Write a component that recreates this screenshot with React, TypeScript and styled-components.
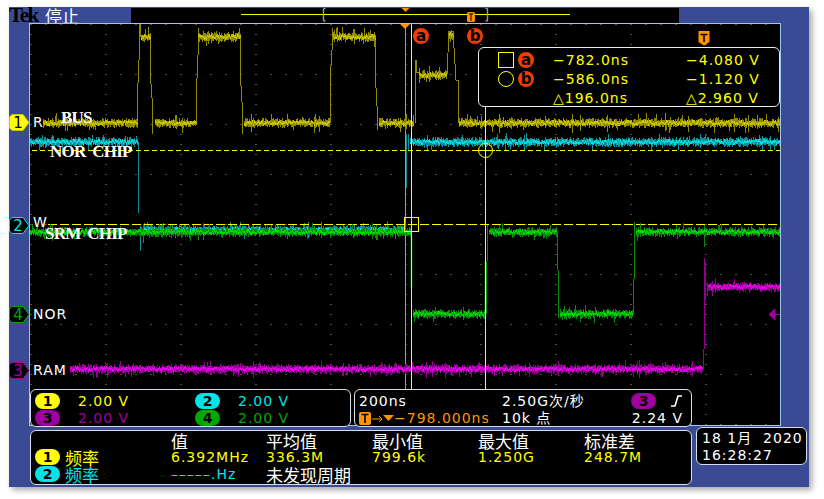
import React from 'react';
import styled, { createGlobalStyle } from 'styled-components';

const YELLOW = '#ffff00';
const CYAN = '#00e4e8';
const PURPLE = '#a000a0';
const GREEN = '#00a800';
const ORANGE = '#ff9400';
const BLUE = '#3b4a94';

const GlobalStyle = createGlobalStyle`
  html, body {
    margin: 0;
    padding: 0;
    background: #fff;
  }
  body {
    font-family: "DejaVu Sans", "Noto Sans CJK SC", sans-serif;
  }
`;

const Page = styled.div`
  width: 824px;
  height: 499px;
  padding: 7px 0 0 9px;
  box-sizing: border-box;
  overflow: hidden;
`;

const Frame = styled.div`
  width: 800px;
  height: 480px;
  background: ${BLUE};
  box-shadow: 3px 3px 6px rgba(0, 0, 0, 0.35);
  display: flex;
  flex-direction: column;
`;

const TopBar = styled.div`
  height: 17px;
  display: flex;
  align-items: center;
  flex: none;
`;

const Brand = styled.span`
  width: 36px;
  font-family: "Liberation Serif", serif;
  font-weight: bold;
  font-size: 21px;
  line-height: 17px;
  letter-spacing: -1.4px;
  color: #000;
`;

const Status = styled.span`
  width: 86px;
  font-family: "Noto Sans CJK SC", sans-serif;
  font-size: 17px;
  line-height: 16px;
  color: #fff;
`;

const RecordBar = styled.svg`
  display: block;
  width: 548px;
  height: 15px;
  background: #000;
`;

const Body = styled.div`
  display: grid;
  grid-template-columns: 21px 662px 117px;
  grid-template-rows: 365px 38px 3px 55px;
  flex: none;
`;

const Screen = styled.div`
  grid-column: 2 / 4;
  grid-row: 1 / 3;
  width: 750px;
  height: 401px;
  position: relative;
  background: #000;
  box-shadow: 0 0 0 1px #9cc4f4;
`;

const Plot = styled.svg`
  display: block;
  width: 750px;
  height: 401px;
`;

const Marker = styled.svg<{ $top: number }>`
  position: absolute;
  left: -21px;
  top: ${(p) => p.$top}px;
  width: 21px;
  height: 17px;
`;

const ChannelLabel = styled.span<{ $left: number; $top: number; $serif?: boolean }>`
  position: absolute;
  left: ${(p) => p.$left}px;
  top: ${(p) => p.$top}px;
  color: #fff;
  white-space: pre;
  line-height: 16px;
  font-family: ${(p) => (p.$serif ? '"Liberation Serif", serif' : '"DejaVu Sans", sans-serif')};
  font-weight: ${(p) => (p.$serif ? 'bold' : 'normal')};
  font-size: ${(p) => (p.$serif ? '17px' : '14px')};
  letter-spacing: ${(p) => (p.$serif ? '-0.8px' : '1px')};
`;

const Badge = styled.span<{ $left?: number; $top?: number }>`
  width: 16px;
  height: 16px;
  border-radius: 50%;
  background: #f23c00;
  color: #000;
  font-size: 15px;
  font-weight: bold;
  line-height: 14px;
  display: inline-flex;
  align-items: center;
  justify-content: center;
  ${(p) => (p.$left !== undefined ? `position: absolute; left: ${p.$left}px; top: ${p.$top}px;` : '')}
`;

const CursorBox = styled.div`
  position: absolute;
  left: 448px;
  top: 23px;
  width: 302px;
  height: 60px;
  box-sizing: border-box;
  padding: 2px 0 0 19px;
  background: #000;
  border: 1px solid #e8eef4;
  border-radius: 6px;
  display: grid;
  grid-template-columns: 20px 35px 133px 1fr;
  grid-auto-rows: 19px;
  align-items: center;
`;

const CursorMark = styled.span<{ $round?: boolean }>`
  width: 14px;
  height: 14px;
  border: 1px solid ${YELLOW};
  border-radius: ${(p) => (p.$round ? '50%' : '0')};
`;

const Value = styled.span<{ $color?: string; $column?: number }>`
  color: ${(p) => p.$color || YELLOW};
  font-size: 14px;
  letter-spacing: 1px;
  white-space: pre;
  line-height: 16px;
  ${(p) => (p.$column ? `grid-column: ${p.$column};` : '')}
`;

const Panel = styled.div`
  box-sizing: border-box;
  background: #000;
  border: 1px solid #d4dfea;
  border-radius: 6px;
`;

const ReadoutRow = styled.div`
  grid-column: 2;
  grid-row: 2;
  display: flex;
  gap: 3px;
  position: relative;
`;

const VerticalPanel = styled(Panel)`
  width: 321px;
  display: grid;
  grid-template-columns: 160px 1fr;
  grid-auto-rows: 17px;
  padding: 2px 0 0 4px;
`;

const ChannelCell = styled.div`
  display: flex;
  align-items: center;
  gap: 18px;
`;

const Pill = styled.span<{ $bg: string }>`
  width: 25px;
  height: 16px;
  flex: none;
  border-radius: 8px;
  background: ${(p) => p.$bg};
  color: #000;
  font-size: 14px;
  font-weight: bold;
  line-height: 16px;
  text-align: center;
`;

const TimePanel = styled(Panel)`
  width: 338px;
  display: grid;
  grid-template-columns: 143px 127px 1fr;
  grid-auto-rows: 17px;
  padding: 2px 8px 0 4px;
`;

const TimeCell = styled.div<{ $end?: boolean }>`
  display: flex;
  align-items: center;
  gap: ${(p) => (p.$end ? '14px' : '0')};
  justify-content: ${(p) => (p.$end ? 'flex-end' : 'flex-start')};
`;

const MeasurePanel = styled(Panel)`
  grid-column: 2;
  grid-row: 4;
  display: grid;
  grid-template-columns: 136px 95px 106px 106px 106px 1fr;
  grid-template-rows: 18px 16px 18px;
  padding: 0 0 0 4px;
  align-items: center;
`;

const Heading = styled.span`
  font-family: "Noto Sans CJK SC", sans-serif;
  font-size: 17px;
  line-height: 17px;
  color: ${(p) => p.color || '#fff'};
  white-space: pre;
`;

const MeasureName = styled.div`
  display: flex;
  align-items: center;
  gap: 5px;
`;

const DatePanel = styled(Panel)`
  grid-column: 3;
  grid-row: 3 / 5;
  align-self: start;
  margin-left: 4px;
  width: 111px;
  height: 38px;
  padding: 2px 0 0 5px;
  display: flex;
  flex-direction: column;
`;

const DateLine = styled.span`
  color: #fff;
  font-size: 14px;
  letter-spacing: 1px;
  line-height: 17px;
  white-space: pre;
  font-family: "DejaVu Sans", "Noto Sans CJK SC", sans-serif;
`;

// seeded so the noise is the same on every render
const makeRandom = (seed: number) => () => {
  seed = (seed * 16807) % 2147483647;
  return seed / 2147483647;
};

type Flat = [number, number, number];

const noisePaths = (flats: Flat[], seed: number, spread = 5, spike = 9) => {
  const rand = makeRandom(seed);
  let band = '';
  let core = '';
  flats.forEach(([x0, x1, y]) => {
    for (let x = x0; x <= x1; x += 1) {
      const big = rand() > 0.86;
      const up = big ? spike * rand() : 1.5 + (spread - 1.5) * rand();
      const down = big ? spike * rand() : 1.5 + (spread - 1.5) * rand();
      band += `M${x + 0.5} ${(y - up).toFixed(1)}V${(y + down).toFixed(1)}`;
      const c = y + (rand() - 0.5) * 3.5;
      core += `M${x} ${c.toFixed(1)}h1.2`;
    }
  });
  return { band, core };
};

const Trace = ({ flats, edges, dark, bright, seed, spread, spike }: {
  flats: Flat[];
  edges: string;
  dark: string;
  bright: string;
  seed: number;
  spread?: number;
  spike?: number;
}) => {
  const { band, core } = noisePaths(flats, seed, spread, spike);
  return (
    <g fill="none" shapeRendering="crispEdges">
      <path d={edges} stroke={dark} strokeWidth="1" />
      <path d={band} stroke={dark} strokeWidth="1" />
      <path d={core} stroke={bright} strokeWidth="2.5" />
    </g>
  );
};

const graticule = () => {
  let d = '';
  for (let row = 0; row <= 8; row += 1) {
    for (let x = 30; x <= 780; x += 15) d += `M${x + 0.5} ${24 + row * 50}h1v1h-1z`;
  }
  for (let col = 0; col <= 10; col += 1) {
    for (let y = 24; y <= 424; y += 10) d += `M${30 + col * 75 + 0.5} ${y}h1v1h-1z`;
  }
  return d;
};

const PentagonMarker = ({ top, color, digit, filled }: { top: number; color: string; digit: string; filled?: boolean }) => (
  <Marker $top={top} viewBox="0 0 21 17">
    <path d="M3 .5H14L20 8.5L14 16.500H3L.5 14V3Z" fill={filled ? color : '#000'} stroke={filled ? '#c8c800' : color} strokeWidth="1" />
    <text x="9" y="14" textAnchor="middle" fontSize="15" fontFamily="DejaVu Sans, sans-serif" fill={filled ? '#000' : color}>{digit}</text>
  </Marker>
);

const App = () => {
  return (
    <Page>
      <GlobalStyle />
      <Frame>
        <TopBar>
          <Brand>Tek</Brand>
          <Status>停止</Status>
          <RecordBar viewBox="131 8 548 15">
            <path d="M241 14.5H570" stroke={YELLOW} strokeWidth="1" />
            <path d="M323.5 8.5V21M323.5 8.5h2M323.5 21h2M487.5 8.5V21M487.5 8.5h-2M487.5 21h-2" stroke="#999" strokeWidth="1.4" fill="none" />
            <path d="M401.5 8H409.5L405.5 12Z" fill={ORANGE} />
            <rect x="467" y="12" width="8" height="10" rx="1.5" fill={ORANGE} />
            <path d="M469 14H473M471 14V21" stroke="#000" strokeWidth="1" />
          </RecordBar>
        </TopBar>
        <Body>
          <Screen>
            <Plot viewBox="30 24 750 401">
              <path d={graticule()} fill="#a89e7c" />
              <path d="M405.5 24V389" stroke="#a09c7c" strokeWidth="1" />
              <Trace
                seed={11}
                dark="#0f8f98"
                bright="#00dcE0"
                flats={[[30, 137, 142], [140, 405, 230], [410, 780, 142]]}
                edges="M138.5 142V213M140.5 228V251M143.500 232V243M406.5 135V188M408 134V150"
              />
              <Trace
                seed={29}
                dark="#8f8a00"
                bright="#c8c400"
                spike={10}
                flats={[[43, 137, 123], [141, 150, 37], [155, 196, 123], [198, 240, 37], [244, 329, 123], [333, 375, 37], [379, 413, 123], [419, 446, 75], [449, 453, 35], [459, 780, 123]]}
                edges="M137.5 123V95L139 60V24M140 24V37M150 37V70L152.5 105V134M196.5 123V90L198 55V28M240 37V70L242.5 110V134M330.5 123V75L332 50V28M375 37V70L377.5 115V130M415.5 123V60M416.5 60V72H419M447 75L449 31H453L456 80H458V123"
              />
              <path d="M32 150.5H780" stroke={YELLOW} strokeWidth="1" strokeDasharray="5 3" />
              <path d="M48 224.5H780" stroke={YELLOW} strokeWidth="1" strokeDasharray="9 3" />
              <Trace
                seed={47}
                dark="#0a8a0a"
                bright="#00d800"
                flats={[[30, 410, 232], [413, 485, 314], [489, 556, 232], [560, 632, 314], [636, 780, 232]]}
                edges="M486.5 314V261M487.5 261V225M557.5 232V270M558.5 270V318M633.5 314V279M634.5 279V222M704.5 225V247"
              />
              <path d="M411.5 237V288M485.5 314V262" stroke="#00d000" strokeWidth="1.4" />
              <Trace
                seed={71}
                dark="#940094"
                bright="#e800e8"
                flats={[[70, 702, 369], [708, 780, 287]]}
                edges="M703.5 369V349M704.5 349V258M705.5 262V300M707.5 282V296M639.5 360V378"
              />
              <path d="M411.5 24V389M485.5 107V389" stroke={YELLOW} strokeWidth="1" />
              <rect x="404.5" y="217.5" width="14" height="14" fill="none" stroke={YELLOW} />
              <circle cx="485.5" cy="150.5" r="7" fill="none" stroke={YELLOW} />
              <path d="M476 150.5H495" stroke={YELLOW} />
              <path d="M400 24H410L405 29Z" fill={ORANGE} />
              <path d="M698.5 31H709.5V42L704 45.5L698.5 42Z" fill={ORANGE} />
              <path d="M700.5 34.5H707.5M704 34.5V42" stroke="#000" strokeWidth="1.6" />
              <path d="M769 314.5L775 309V320ZM774 314.5H780" fill={PURPLE} stroke={PURPLE} />
            </Plot>
            <PentagonMarker top={90} color={YELLOW} digit="1" filled />
            <PentagonMarker top={193} color={CYAN} digit="2" />
            <PentagonMarker top={282} color={GREEN} digit="4" />
            <PentagonMarker top={338} color={PURPLE} digit="3" />
            <ChannelLabel $left={3} $top={90}>R</ChannelLabel>
            <ChannelLabel $left={31} $top={86} $serif>BUS</ChannelLabel>
            <ChannelLabel $left={20} $top={120} $serif>NOR  CHIP</ChannelLabel>
            <ChannelLabel $left={3} $top={190}>W</ChannelLabel>
            <ChannelLabel $left={15} $top={202} $serif>SRM  CHIP</ChannelLabel>
            <ChannelLabel $left={3} $top={282}>NOR</ChannelLabel>
            <ChannelLabel $left={3} $top={338}>RAM</ChannelLabel>
            <Badge $left={383} $top={4}>a</Badge>
            <Badge $left={437} $top={4}>b</Badge>
            <CursorBox>
              <CursorMark />
              <Badge>a</Badge>
              <Value>−782.0ns</Value>
              <Value>−4.080 V</Value>
              <CursorMark $round />
              <Badge>b</Badge>
              <Value>−586.0ns</Value>
              <Value>−1.120 V</Value>
              <Value $column={3}>△196.0ns</Value>
              <Value $column={4}>△2.960 V</Value>
            </CursorBox>
          </Screen>
          <ReadoutRow>
            <VerticalPanel>
              <ChannelCell><Pill $bg={YELLOW}>1</Pill><Value>2.00 V</Value></ChannelCell>
              <ChannelCell><Pill $bg={CYAN}>2</Pill><Value $color={CYAN}>2.00 V</Value></ChannelCell>
              <ChannelCell><Pill $bg={PURPLE}>3</Pill><Value $color={PURPLE}>2.00 V</Value></ChannelCell>
              <ChannelCell><Pill $bg={GREEN}>4</Pill><Value $color={GREEN}>2.00 V</Value></ChannelCell>
            </VerticalPanel>
            <TimePanel>
              <TimeCell><Value $color="#fff">200ns</Value></TimeCell>
              <TimeCell><Value $color="#fff">2.50G次/秒</Value></TimeCell>
              <TimeCell $end>
                <Pill $bg={PURPLE}>3</Pill>
                <svg width="13" height="14" viewBox="0 0 13 14">
                  <path d="M1 12H5L8 2H12" fill="none" stroke="#fff" strokeWidth="1.6" />
                </svg>
              </TimeCell>
              <TimeCell>
                <svg width="24" height="14" viewBox="0 0 24 14">
                  <rect x="0" y="1" width="12" height="13" rx="2" fill={ORANGE} />
                  <path d="M2.5 3.5H9.5M6 3.5V12" stroke="#000" strokeWidth="1.6" />
                  <path d="M13 8H23M20 5L23 8L20 11" fill="none" stroke={ORANGE} strokeWidth="1" />
                </svg>
                <svg width="11" height="8" viewBox="0 0 11 8"><path d="M0 1H11L5.500 7Z" fill={ORANGE} /></svg>
                <Value $color={ORANGE}>−798.000ns</Value>
              </TimeCell>
              <TimeCell><Value $color="#fff">10k 点</Value></TimeCell>
              <TimeCell $end><Value $color="#fff">2.24 V</Value></TimeCell>
            </TimePanel>
          </ReadoutRow>
          <MeasurePanel>
            <span />
            <Heading>值</Heading>
            <Heading>平均值</Heading>
            <Heading>最小值</Heading>
            <Heading>最大值</Heading>
            <Heading>标准差</Heading>
            <MeasureName><Pill $bg={YELLOW}>1</Pill><Heading color={YELLOW}>频率</Heading></MeasureName>
            <Value>6.392MHz</Value>
            <Value>336.3M</Value>
            <Value>799.6k</Value>
            <Value>1.250G</Value>
            <Value>248.7M</Value>
            <MeasureName><Pill $bg={CYAN}>2</Pill><Heading color={CYAN}>频率</Heading></MeasureName>
            <Value $color={CYAN}>–––––.Hz</Value>
            <Heading>未发现周期</Heading>
          </MeasurePanel>
          <DatePanel>
            <DateLine>18 1月  2020</DateLine>
            <DateLine>16:28:27</DateLine>
          </DatePanel>
        </Body>
      </Frame>
    </Page>
  );
};

export default App;
